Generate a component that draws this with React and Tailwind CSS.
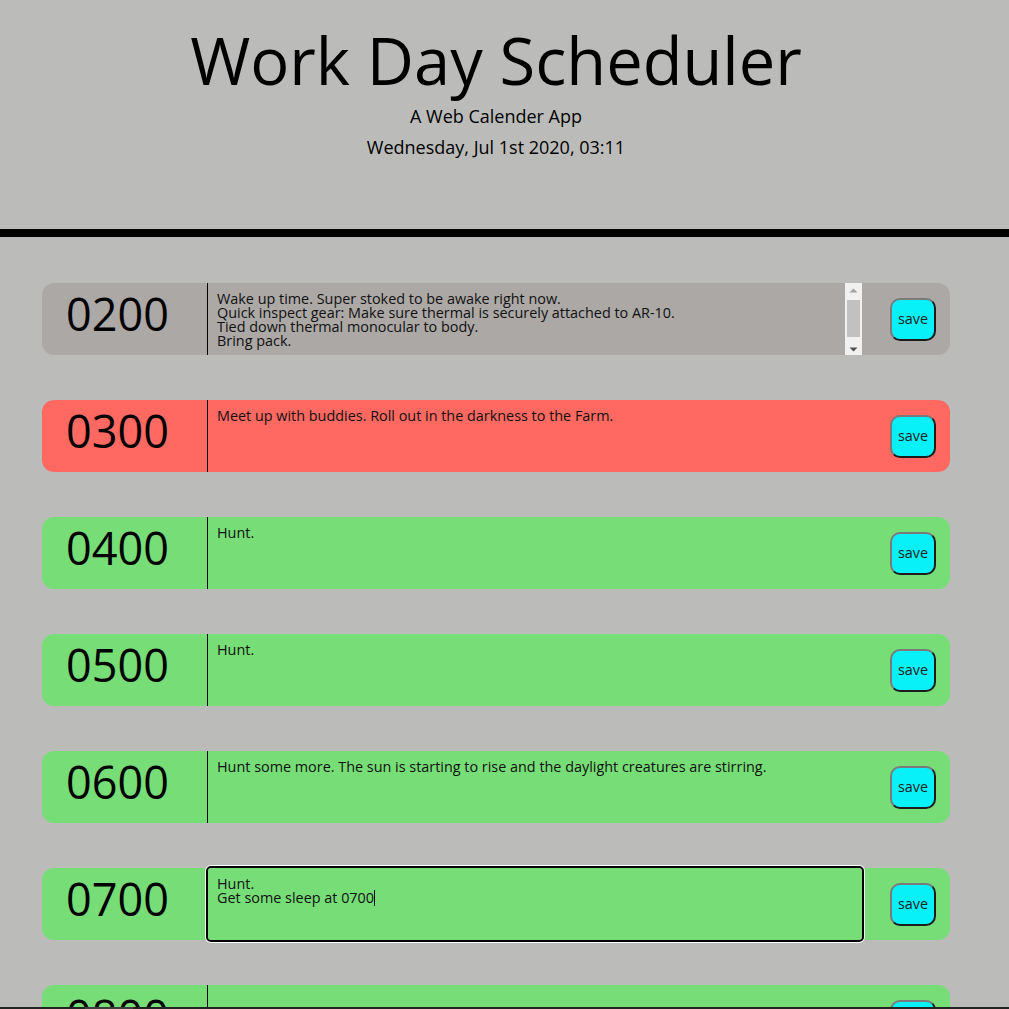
import React from "react";

const rows = [
  {
    hour: "0200",
    bg: "bg-[#aba8a6]",
    text:
      "Wake up time. Super stoked to be awake right now.\nQuick inspect gear: Make sure thermal is securely attached to AR-10.\nTied down thermal monocular to body.\nBring pack.",
    scroll: true,
  },
  { hour: "0300", bg: "bg-[#ff6961]", text: "Meet up with buddies. Roll out in the darkness to the Farm." },
  { hour: "0400", bg: "bg-[#77dd77]", text: "Hunt." },
  { hour: "0500", bg: "bg-[#77dd77]", text: "Hunt." },
  {
    hour: "0600",
    bg: "bg-[#77dd77]",
    text: "Hunt some more. The sun is starting to rise and the daylight creatures are stirring.",
  },
  { hour: "0700", bg: "bg-[#77dd77]", text: "Hunt.\nGet some sleep at 0700", focused: true },
  { hour: "0800", bg: "bg-[#77dd77]", text: "" },
  { hour: "0900", bg: "bg-[#77dd77]", text: "" },
];

function FakeScrollbar() {
  return (
    <div className="absolute top-0 right-0 flex h-full w-[17px] flex-col items-center bg-[#f1f1f1]">
      <svg width="9" height="5" viewBox="0 0 9 5" className="mt-[5px]">
        <path d="M0.5 4.5 L4.5 0.5 L8.5 4.5 Z" fill="#a3a3a3" />
      </svg>
      <div className="mt-[7px] h-[37px] w-[13px] bg-[#c1c1c1]" />
      <svg width="9" height="5" viewBox="0 0 9 5" className="mt-[10px]">
        <path d="M0.5 0.5 L8.5 0.5 L4.5 4.5 Z" fill="#505050" />
      </svg>
    </div>
  );
}

function Row({ hour, bg, text, focused, scroll }) {
  return (
    <div className={`flex h-[72px] w-[908px] shrink-0 rounded-[12px] ${bg}`}>
      <div className="flex w-[166px] shrink-0 items-center border-r border-black pb-[10px] pl-[24px] text-[45px] font-medium leading-[48px] text-black">
        {hour}
      </div>
      <div
        className={
          "relative h-[72px] w-[654px] shrink-0 " +
          (focused ? "z-10 rounded-[3px] ring-2 ring-black shadow-[0_0_0_3px_white]" : "")
        }
      >
        <textarea
          defaultValue={text}
          className="block h-full w-full resize-none overflow-hidden bg-transparent px-[9px] pt-[9px] pb-[8px] text-[14.4px] leading-[14px] text-[#111] outline-none"
        />
        {scroll && <FakeScrollbar />}
        {focused && <div className="absolute top-[22px] left-[166px] h-[16px] w-px bg-black" />}
      </div>
      <div className="flex flex-1 items-center justify-end pr-[14px]">
        <button className="h-[43px] w-[46px] rounded-[10px] border-2 border-t-[#7a7a7a] border-l-[#7a7a7a] border-b-[#1c1c1c] border-r-[#1c1c1c] bg-[#08f0f8] text-[14.4px] leading-none text-[#222]">
          save
        </button>
      </div>
    </div>
  );
}

export default function App() {
  return (
    <div
      className="relative h-[1009px] w-[1009px] overflow-hidden bg-[#bbbcba] text-black"
      style={{ fontFamily: '"Open Sans", "Noto Sans", sans-serif' }}
    >
      <div className="w-[992px]">
        <header className="flex h-[229px] flex-col items-center pt-[22px] text-center">
          <h1 className="text-[65px] font-normal leading-[77px]">Work Day Scheduler</h1>
          <p className="mt-[4px] text-[18px] font-normal leading-[27px]">A Web Calender App</p>
          <p className="mt-[4px] text-[18px] font-normal leading-[27px]">Wednesday, Jul 1st 2020, 03:11</p>
        </header>
      </div>
      <div className="h-[8px] w-full bg-black" />
      <div className="w-[992px]">
        <div className="flex flex-col items-center gap-[45px] pt-[46px]">
          {rows.map((r) => (
            <Row key={r.hour} {...r} />
          ))}
        </div>
      </div>
      <div className="absolute bottom-0 left-0 h-[2px] w-full bg-[#1f2520]">
        <div className="ml-[85px] h-full w-[48px] bg-[#3b403b]" />
      </div>
    </div>
  );
}
